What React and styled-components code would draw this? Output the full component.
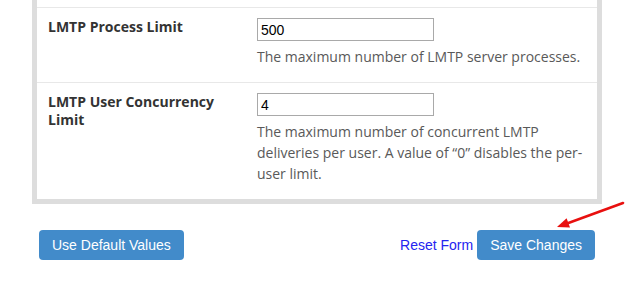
import React from 'react';
import styled, { createGlobalStyle } from 'styled-components';

const GlobalStyle = createGlobalStyle`
  body {
    margin: 0;
    background: #fff;
    font-family: "Open Sans", "Liberation Sans", sans-serif;
  }
`;

const Page = styled.div`
  position: relative;
  width: 637px;
  height: 285px;
  overflow: hidden;
`;

const Panel = styled.div`
  box-sizing: border-box;
  width: 570px;
  margin-left: 32px;
  background: #fff;
  border: 5px solid #dddddd;
  border-top: none;
`;

const Stub = styled.div`
  height: 7px;
`;

const Row = styled.div`
  display: grid;
  grid-template-columns: 209px 1fr;
  padding: 10px 11px 15px;
  border-top: 1px solid #e8e8e8;
`;

const Label = styled.div`
  padding-right: 20px;
  font-family: "Open Sans", sans-serif;
  font-weight: 700;
  font-size: 14px;
  line-height: 18px;
  color: #333;
`;

const Input = styled.input`
  display: block;
  box-sizing: border-box;
  width: 177px;
  height: 23px;
  margin: 0;
  padding: 0 3px;
  border: 1px solid #a9a9a9;
  font-family: "Liberation Sans", Arial, sans-serif;
  font-size: 14px;
  color: #000;
  outline: none;
`;

const Help = styled.div`
  margin-top: 5px;
  font-family: "Open Sans", sans-serif;
  font-size: 14px;
  line-height: 21px;
  color: #595959;
`;

const Footer = styled.div`
  display: flex;
  justify-content: space-between;
  align-items: center;
  padding: 26px 42px 0 39px;
`;

const Actions = styled.div`
  display: flex;
  align-items: center;
  gap: 4px;
`;

const Button = styled.button`
  background: #428bca;
  color: #fff;
  border: none;
  border-radius: 4px;
  padding: 5px 13px;
  font-family: "Liberation Sans", Arial, sans-serif;
  font-size: 14px;
  line-height: 20px;
  cursor: pointer;
`;

const Link = styled.a`
  font-family: "Liberation Sans", Arial, sans-serif;
  font-size: 14px;
  color: #2424f0;
  text-decoration: none;
`;

const Arrow = styled.svg`
  position: absolute;
  left: 550px;
  top: 195px;
`;

const settings = [
  {
    label: 'LMTP Process Limit',
    value: '500',
    help: 'The maximum number of LMTP server processes.',
  },
  {
    label: 'LMTP User Concurrency Limit',
    value: '4',
    help: 'The maximum number of concurrent LMTP deliveries per user. A value of \u201C0\u201D disables the per-user limit.',
  },
];

export default function App() {
  return (
    <Page>
      <GlobalStyle />
      <Panel>
        <Stub />
        {settings.map((s) => (
          <Row key={s.label}>
            <Label>{s.label}</Label>
            <div>
              <Input type="text" defaultValue={s.value} />
              <Help>{s.help}</Help>
            </div>
          </Row>
        ))}
      </Panel>
      <Footer>
        <Button type="button">Use Default Values</Button>
        <Actions>
          <Link href="#">Reset Form</Link>
          <Button type="submit">Save Changes</Button>
        </Actions>
      </Footer>
      <Arrow width="80" height="40" viewBox="0 0 80 40">
        <line x1="73" y1="8" x2="17" y2="28.5" stroke="#e8100f" strokeWidth="2.5" strokeLinecap="round" />
        <polygon points="7,32 20,32.6 16.6,23.2" fill="#e8100f" />
      </Arrow>
    </Page>
  );
}
